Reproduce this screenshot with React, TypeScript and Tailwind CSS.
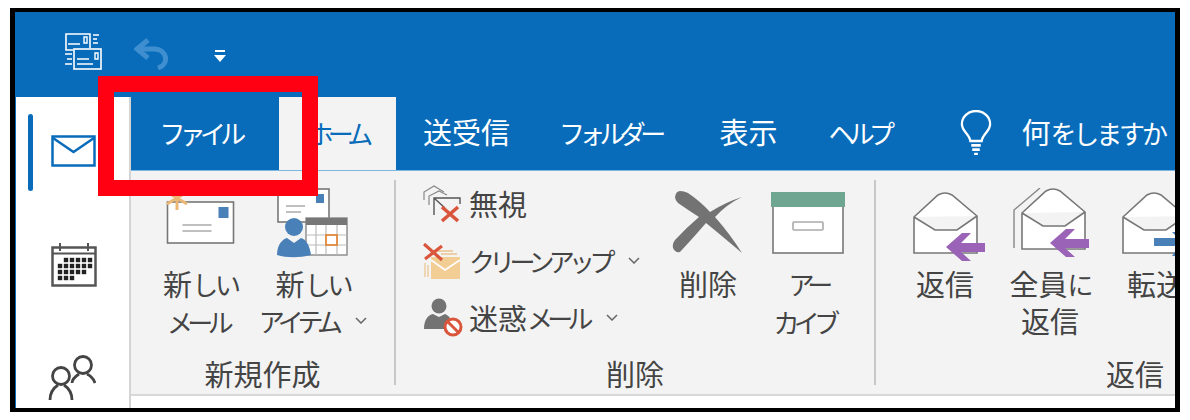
import type { ReactNode } from 'react';

// Outlook ribbon screenshot with the red "file tab" callout

const FONT = "font-['Noto_Sans_CJK_JP','Noto_Sans',sans-serif]";

// kana in the reference is Meiryo UI, much narrower than the Noto glyphs
function Kana({ children }: { children: ReactNode }) {
  return <span className="text-[26px] tracking-[-0.22em]">{children}</span>;
}

function Hira({ children }: { children: ReactNode }) {
  return <span className="text-[26px] tracking-[-0.12em]">{children}</span>;
}

function Chevron({ className = '' }: { className?: string }) {
  return (
    <svg width="12" height="7" viewBox="0 0 12 7" className={className}>
      <path d="M1 1 L6 6 L11 1" fill="none" stroke="#666" strokeWidth="1.5" />
    </svg>
  );
}

// ---- title bar icons ----

function SendReceiveIcon() {
  return (
    <svg width="38" height="38" viewBox="0 0 38 38" fill="none" stroke="#fff" strokeWidth="1.6">
      <path d="M9 17 H2 V1 H26 V15" />
      <path d="M4 11 H16 M20 4 h3 v6 h-3 z" strokeWidth="1.4" />
      <path d="M29 2 h6 M29 6 h4 M29 10 h5" strokeWidth="1.4" />
      <rect x="10" y="16" width="27" height="20" />
      <path d="M13 26 H25 M13 31 H29 M31 20 v6 h3 v-6 z" strokeWidth="1.4" />
      <path d="M1 21 h7 M3 26 h5 M1 31 h7" strokeWidth="1.4" />
    </svg>
  );
}

function UndoIcon() {
  return (
    <svg width="36" height="32" viewBox="0 0 36 32" fill="none" stroke="#3f8fd0" strokeWidth="5">
      <path d="M14 2 L3 11 L14 20" />
      <path d="M4 11 H20 C33 11 36 26 24 30" />
    </svg>
  );
}

// ---- sidebar icons ----

function MailNavIcon() {
  return (
    <svg width="45" height="32" viewBox="0 0 45 32" fill="#fff" stroke="#086cba" strokeWidth="2.5">
      <rect x="1.5" y="1.5" width="42" height="29" />
      <path d="M2 3 L22.5 17 L43 3" fill="none" />
    </svg>
  );
}

function CalendarNavIcon() {
  const dots = [
    [15, 18], [21, 18], [27, 18], [33, 18], [39, 18],
    [9, 24], [15, 24], [21, 24], [27, 24], [33, 24], [39, 24],
    [9, 30], [15, 30], [21, 30], [27, 30], [33, 30],
    [9, 36], [15, 36], [21, 36],
  ];
  return (
    <svg width="46" height="46" viewBox="0 0 46 46">
      <rect x="1.5" y="5.5" width="43" height="38" fill="#fff" stroke="#555" strokeWidth="2.5" />
      <path d="M2 11.5 H44" stroke="#555" strokeWidth="2" />
      <path d="M9 1 V9 M37 1 V9" stroke="#555" strokeWidth="2" />
      {dots.map(([x, y]) => (
        <rect key={`${x}-${y}`} x={x - 2.2} y={y - 2.2} width="4.4" height="4.4" fill="#222" />
      ))}
    </svg>
  );
}

function PeopleNavIcon() {
  return (
    <svg width="48" height="48" viewBox="0 0 48 48" fill="none" stroke="#444" strokeWidth="2.8">
      <circle cx="13" cy="22" r="8.5" />
      <path d="M2 46 C2 37 7 33 10 31 M16 31 C19 33 24 37 24 46" />
      <circle cx="35" cy="11" r="8.5" />
      <path d="M24 29 C24 25 28 22 31 20 M39 20 C43 22 46 26 47 29" />
    </svg>
  );
}

// ---- ribbon icons ----

function NewMailIcon() {
  return (
    <svg width="72" height="56" viewBox="0 0 72 56">
      <rect x="2.5" y="12" width="66" height="41" fill="#fff" stroke="#777" strokeWidth="1.6" />
      <rect x="53.5" y="17" width="10" height="11" fill="#4a80b8" />
      <path d="M17.5 35 H46.5 M17.5 41 H46.5" stroke="#aaa" strokeWidth="1.6" />
      <path d="M12 -2 V20 M2 2 L22 14 M22 2 L2 14" stroke="#ecb775" strokeWidth="3" />
    </svg>
  );
}

function NewItemIcon() {
  return (
    <svg width="72" height="72" viewBox="0 0 72 72">
      <rect x="1" y="1" width="51" height="33" fill="#fff" stroke="#777" strokeWidth="1.6" />
      <rect x="39" y="6" width="8" height="9" fill="#4a80b8" />
      <path d="M9 18 H28 M9 24 H24" stroke="#aaa" strokeWidth="1.6" />
      <rect x="29" y="30" width="41" height="37" fill="#fff" stroke="#888" strokeWidth="1.4" />
      <rect x="29" y="30" width="41" height="7" fill="#777" />
      <path d="M39 37 V67 M49 37 V67 M60 37 V67 M29 47 H70 M29 57 H70" stroke="#bbb" strokeWidth="1.2" />
      <rect x="49" y="47" width="11" height="10" fill="#fff" stroke="#e08a3c" strokeWidth="1.8" />
      <circle cx="17" cy="39" r="9" fill="#4a80b8" />
      <path d="M0 67 C0 56 6 51 10 50 L17 55 L24 50 C29 51 33 58 34 67 C22 70 10 70 0 67 Z" fill="#4a80b8" />
    </svg>
  );
}

function IgnoreIcon() {
  return (
    <svg width="38" height="38" viewBox="0 0 38 38" fill="none">
      <path d="M1 15 V7 L11 1 L21 7" stroke="#888" strokeWidth="1.2" />
      <path d="M6 20 V11 L16 6 L24 10" stroke="#888" strokeWidth="1.2" />
      <path d="M11 30 V13 H37 V19 M11 13 L22 23" stroke="#555" strokeWidth="1.4" />
      <path d="M19 22 L35 36 M35 22 L19 36" stroke="#d9553c" strokeWidth="3.6" />
    </svg>
  );
}

function CleanupIcon() {
  return (
    <svg width="38" height="36" viewBox="0 0 38 36" fill="none">
      <path d="M8 14 L37 14 V36 H8 Z" fill="#f2cd94" />
      <path d="M8 17 L22 27 L37 17" stroke="#fff" strokeWidth="1.6" />
      <path d="M14 8 H30 M18 11 H34" stroke="#ecc48d" strokeWidth="1.4" />
      <path d="M2 20 V34 M5 22 V34" stroke="#ecc48d" strokeWidth="1.2" />
      <path d="M1 1 L19 17 M19 3 L2 16" stroke="#d9553c" strokeWidth="3.2" />
    </svg>
  );
}

function JunkIcon() {
  return (
    <svg width="40" height="40" viewBox="0 0 40 40" fill="none">
      <circle cx="16" cy="8" r="7.5" fill="#737373" />
      <path d="M1 31 C1 22 5 17 10 16 L16 19 L22 16 C24 17 26 18 27 20 C23 23 21 27 22 31 Z" fill="#737373" />
      <circle cx="30" cy="29" r="8" fill="#fff" stroke="#d9553c" strokeWidth="3" />
      <path d="M25 24 L35 34" stroke="#d9553c" strokeWidth="3" />
    </svg>
  );
}

function DeleteIcon() {
  return (
    <svg width="72" height="66" viewBox="0 0 72 66">
      <path
        d="M3 7 Q4 1 8 1 Q12 1 16 3 Q28 11 38 22 Q54 12 70 7 Q55 14 43 27 Q58 44 70 63 Q50 46 34 33 Q22 47 8 62 Q3 63 1 58 Q0 54 3 50 Q14 38 27 27 Q16 20 6 13 Q3 10 3 7 Z"
        fill="#737373"
      />
    </svg>
  );
}

function ArchiveIcon() {
  return (
    <svg width="74" height="62" viewBox="0 0 74 62">
      <rect x="2" y="10" width="70" height="51" fill="#fff" stroke="#777" strokeWidth="1.6" />
      <rect x="0" y="0" width="74" height="15" fill="#6fa692" />
      <rect x="22" y="30" width="30" height="8" rx="1" fill="#fff" stroke="#aaa" strokeWidth="1.6" />
    </svg>
  );
}

const ENVELOPE = 'M1 25 L25 3 Q32 -1 39 3 L64 24 V61 H1 Z M1 25 L22 38 H44 L64 24';

function ReplyArrow({ x }: { x: number }) {
  return (
    <path
      transform={`translate(${x} 41)`}
      d="M0 14 L16 0 H25 L15 10 H39 V19 H15 L25 28 H16 Z"
      fill="#9b63b8"
    />
  );
}

function ReplyIcon() {
  return (
    <svg width="74" height="70" viewBox="0 0 74 70">
      <path d={ENVELOPE} fill="#fff" stroke="#777" strokeWidth="1.6" />
      <ReplyArrow x={33} />
    </svg>
  );
}

function ReplyAllIcon() {
  return (
    <svg width="78" height="70" viewBox="0 0 78 70">
      <path d="M1 60 V22 L27 0" fill="none" stroke="#888" strokeWidth="1.4" />
      <g transform="translate(8 0)">
        <path d={ENVELOPE} fill="#fff" stroke="#777" strokeWidth="1.6" />
      </g>
      <ReplyArrow x={37} />
    </svg>
  );
}

function ForwardIcon() {
  return (
    <svg width="74" height="70" viewBox="0 0 74 70" className="shrink-0">
      <path d={ENVELOPE} fill="#fff" stroke="#777" strokeWidth="1.6" />
      <path d="M32 54 H58 V46 H32 Z" fill="#4a80b8" />
      <path d="M50 40 H58 L72 50 L58 64 H50 L60 50 Z" fill="#4a80b8" />
    </svg>
  );
}

// ---- layout pieces ----

function Tab({ children, className = '' }: { children: ReactNode; className?: string }) {
  return <div className={`flex h-full items-center whitespace-nowrap pb-[3px] ${className}`}>{children}</div>;
}

function LargeButton({ icon, iconBox, lines, className = '' }: {
  icon: ReactNode;
  iconBox: string;
  lines: ReactNode[];
  className?: string;
}) {
  return (
    <div className={`flex flex-col items-center ${className}`}>
      <div className={`h-[85px] shrink-0 ${iconBox}`}>{icon}</div>
      <div className="flex flex-col items-center whitespace-nowrap text-[29px] leading-[37px] text-[#444]">
        {lines.map((line, i) => (
          <div key={i} className="flex items-center">{line}</div>
        ))}
      </div>
    </div>
  );
}

function SmallRow({ icon, children }: { icon: ReactNode; children: ReactNode }) {
  return (
    <div className="flex h-[57px] items-center whitespace-nowrap text-[29px] text-[#444]">
      <div className="flex w-[46px] shrink-0 justify-start">{icon}</div>
      {children}
    </div>
  );
}

function GroupLabel({ children, className = '' }: { children: ReactNode; className?: string }) {
  return <div className={`whitespace-nowrap text-[29px] leading-[37px] text-[#444] ${className}`}>{children}</div>;
}

export default function App() {
  return (
    <div className={`h-[420px] w-[1190px] bg-white pl-[10px] pt-[8px] ${FONT}`}>
      <div className="relative h-[404px] w-[1170px] overflow-hidden border-x-[5px] border-y-[4px] border-black bg-[#086cba]">
        {/* quick access bar */}
        <div className="flex h-[85px] items-start">
          <div className="ml-[49px] mt-[21px]"><SendReceiveIcon /></div>
          <div className="ml-[32px] mt-[26px]"><UndoIcon /></div>
          <svg width="12" height="13" viewBox="0 0 12 13" className="ml-[44px] mt-[38px]">
            <path d="M1 1 H11" stroke="#fff" strokeWidth="2" />
            <path d="M0 5 H12 L6 12 Z" fill="#fff" />
          </svg>
        </div>

        <div className="flex h-[311px]">
          {/* nav sidebar */}
          <div className="flex w-[116px] shrink-0 flex-col border-l border-r-2 border-l-[#086cba] border-r-[#d4d4d4] bg-white">
            <div className="flex h-[111px] items-start">
              <div className="ml-[12px] mt-[17px] h-[77px] w-[5px] rounded-sm bg-[#086cba]" />
              <div className="ml-[18px] mt-[38px]"><MailNavIcon /></div>
            </div>
            <div className="ml-[35px] mt-[34px]"><CalendarNavIcon /></div>
            <div className="ml-[32px] mt-[66px]"><PeopleNavIcon /></div>
          </div>

          <div className="flex min-w-0 flex-1 flex-col">
            {/* tabs */}
            <div className="flex h-[73px] shrink-0 items-center text-[29px] text-white">
              <Tab className="w-[148px] justify-center pr-[10px]">
                <Kana>ファイル</Kana>
              </Tab>
              <Tab className="w-[117px] justify-center bg-[#f3f3f3] text-[#086cba]">
                <Kana>ホーム</Kana>
              </Tab>
              <Tab className="px-[27px]">送受信</Tab>
              <Tab className="pl-[22px] pr-[24px]"><Kana>フォルダー</Kana></Tab>
              <Tab className="pl-[35px] pr-[25px]">表示</Tab>
              <Tab className="w-[130px] pl-[26px]"><Kana>ヘルプ</Kana></Tab>
              <svg width="32" height="45" viewBox="0 0 34 42" preserveAspectRatio="none" className="ml-[28px] mb-[3px] shrink-0" fill="none" stroke="#fff" strokeWidth="2.4">
                <path d="M11 29 C10 22 2 20 2 13 C2 6 9 1 17 1 C25 1 32 6 32 13 C32 20 24 22 23 29 Z" />
                <path d="M12 33 H22 M13 37 H21 M15 41 H19" />
              </svg>
              <Tab className="ml-[29px]">何<Hira>をしますか</Hira></Tab>
            </div>

            {/* ribbon */}
            <div className="flex h-[226px] shrink-0 overflow-hidden border-b-2 border-t border-b-[#d8d8d8] border-t-[#7fb6e0] bg-[#f3f3f3]">
              {/* new */}
              <div className="my-[9px] flex w-[265px] shrink-0 flex-col border-r-2 border-r-[#c8c8c8]">
                <div className="flex flex-1">
                  <LargeButton
                    className="ml-[12px] w-[115px]"
                    iconBox="pt-[10px]"
                    icon={<NewMailIcon />}
                    lines={[<>新<Hira>しい</Hira></>, <span className="pr-[6px]"><Kana>メール</Kana></span>]}
                  />
                  <LargeButton
                    className="w-[110px]"
                    iconBox="pt-[8px]"
                    icon={<NewItemIcon />}
                    lines={[
                      <>新<Hira>しい</Hira></>,
                      <><Kana>アイテム</Kana><Chevron className="ml-[18px]" /></>,
                    ]}
                  />
                </div>
                <GroupLabel className="mb-[-7px] text-center">新規作成</GroupLabel>
              </div>

              {/* delete */}
              <div className="my-[9px] flex w-[480px] shrink-0 flex-col border-r-2 border-r-[#c8c8c8]">
                <div className="flex flex-1">
                  <div className="ml-[27px] mt-[-5px] w-[249px]">
                    <SmallRow icon={<IgnoreIcon />}>無視</SmallRow>
                    <SmallRow icon={<CleanupIcon />}>
                      <Kana>クリーンアップ</Kana>
                      <Chevron className="ml-[18px]" />
                    </SmallRow>
                    <SmallRow icon={<JunkIcon />}>
                      迷惑<Kana>メール</Kana>
                      <Chevron className="ml-[18px]" />
                    </SmallRow>
                  </div>
                  <LargeButton className="w-[72px]" iconBox="pt-[10px]" icon={<DeleteIcon />} lines={['削除']} />
                  <LargeButton
                    className="ml-[27px] w-[74px]"
                    iconBox="pt-[12px]"
                    icon={<ArchiveIcon />}
                    lines={[<Kana>アー</Kana>, <span className="pr-[8px]"><Kana>カイブ</Kana></span>]}
                  />
                </div>
                <GroupLabel className="mb-[-7px] text-center">削除</GroupLabel>
              </div>

              {/* reply */}
              <div className="my-[9px] flex min-w-0 flex-1 flex-col">
                <div className="flex flex-1">
                  <LargeButton className="ml-[37px] w-[64px]" iconBox="self-start pt-[12px]" icon={<ReplyIcon />} lines={['返信']} />
                  <LargeButton
                    className="ml-[36px] w-[74px]"
                    iconBox="self-start pt-[8px]"
                    icon={<ReplyAllIcon />}
                    lines={[<>全員<Hira>に</Hira></>, '返信']}
                  />
                  <div className="ml-[35px] flex w-[74px] flex-col">
                    <div className="h-[85px] pt-[12px]"><ForwardIcon /></div>
                    <div className="whitespace-nowrap pl-[5px] text-[29px] leading-[37px] text-[#444]">転送</div>
                  </div>
                </div>
                <GroupLabel className="mb-[-7px] ml-[230px]">返信</GroupLabel>
              </div>
            </div>
            <div className="flex-1 bg-white" />
          </div>
        </div>

        {/* red callout round the file tab */}
        <div className="absolute left-[83px] top-[64px] h-[120px] w-[220px] border-[16px] border-[#ff0013]" />
      </div>
    </div>
  );
}
